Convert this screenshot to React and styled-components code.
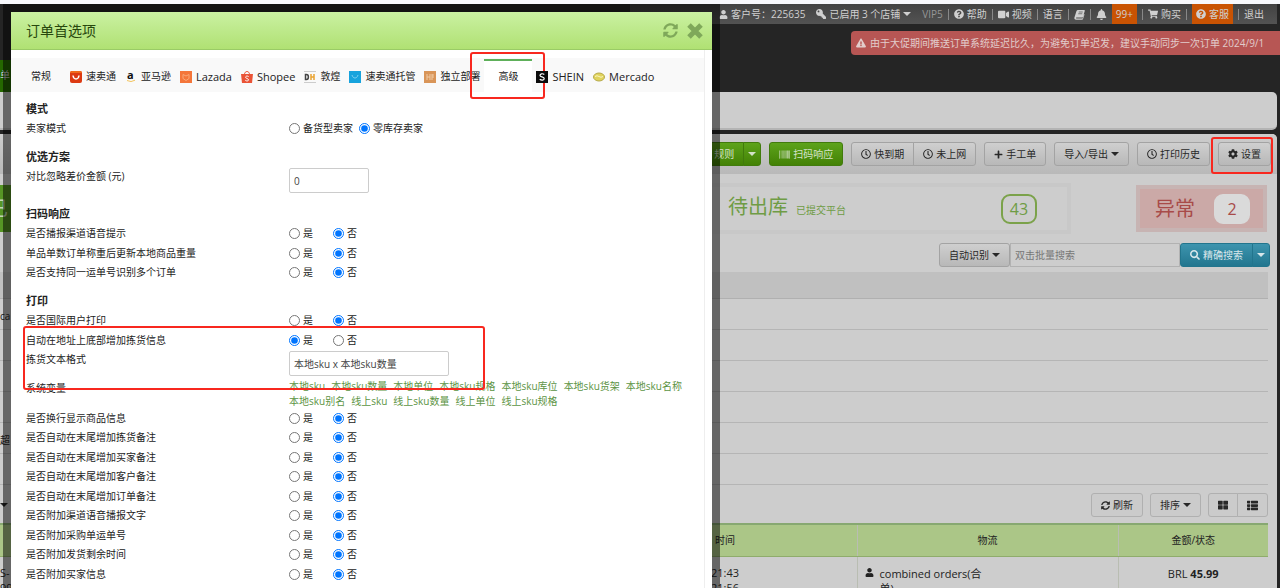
import React from "react";
import styled, {createGlobalStyle, css} from "styled-components";
import {
    FaBarcode,
    FaBell,
    FaCog,
    FaExclamationTriangle,
    FaKey,
    FaPlus,
    FaQuestionCircle,
    FaRegClock,
    FaSearch,
    FaShoppingCart,
    FaSyncAlt,
    FaThLarge,
    FaThList,
    FaUser,
    FaVideo
} from "react-icons/fa";

const GlobalStyle = createGlobalStyle`
  * {
    box-sizing: border-box;
  }

  body {
    margin: 0;
    background: #252525;
    font-family: "Open Sans", "Noto Sans CJK SC", sans-serif;
    font-size: 10px;
    line-height: 15px;
    color: #222;
  }

  button, input {
    font: inherit;
    color: inherit;
  }

  a {
    color: inherit;
    text-decoration: none;
  }
`;

/* ---------- page behind the dialog ---------- */

const Screen = styled.div`
  position: relative;
  height: 100vh;
  overflow: hidden;
  border-top: 4px solid #f7f8fc;
`;

const TopBar = styled.nav`
  display: flex;
  align-items: center;
  justify-content: flex-end;
  gap: 5px;
  height: 20px;
  margin: 0 3px 0 630px;
  padding-right: 13px;
  background: linear-gradient(#424242, #535353);
  color: #d0d0d0;
  white-space: nowrap;
`;

const TopLink = styled.a`
  display: flex;
  align-items: center;
  gap: 3px;
  height: 20px;
  color: ${props => props.$dim ? '#969696' : '#d0d0d0'};
  ${props => props.$hot && css`
    padding: 0 4px;
    background: #c95303;
  `}
  ${props => props.$wide && css`
    margin-right: 6px;
  `}
`;

const Bar = styled.span`
  width: 1px;
  height: 11px;
  background: #888;
`;

const Caret = styled.span`
  width: 8px;
  height: 4px;
  border: 4px solid transparent;
  border-top-color: currentColor;
  border-bottom: 0;
`;

const KeyIcon = styled(FaKey)`
  transform: scaleX(-1);
`;

const Header = styled.header`
  display: flex;
  justify-content: space-between;
  height: 68px;
`;

const NavTab = styled.div`
  align-self: flex-end;
  width: 40px;
  height: 32px;
  padding-top: 8px;
  background: #256800;
  color: #ccc;
`;

const Alert = styled.div`
  display: flex;
  align-items: center;
  gap: 4px;
  width: 429px;
  height: 24px;
  margin-top: 7px;
  padding-left: 5px;
  border-radius: 4px 0 0 4px;
  background: #b75654;
  color: #e2cccb;
  white-space: nowrap;
`;

const NavPanel = styled.div`
  height: 38px;
  margin: 0 3px 4px 0;
  border-radius: 0 5px 5px 0;
  background: #cdcdcd;
  border-bottom: 2px solid #b4b4b4;
`;

const Content = styled.main`
  margin-right: 3px;
  border-radius: 0 5px 0 0;
  background: #cdcdcd;
`;

const Toolbar = styled.div`
  display: flex;
  align-items: center;
  justify-content: flex-end;
  gap: 8px;
  height: 40px;
  padding: 0 6px 0 0;
  border-radius: 0 5px 0 0;
  background: linear-gradient(#cdcdcd, #b9b9b9);
`;

const tones = {
    grey: css`
      background: linear-gradient(#cfcfcf, #b8b8b8);
      border-color: #a3a3a3;
      color: #282828;
    `,
    green: css`
      background: linear-gradient(#5da31b, #438205);
      border-color: #417b0c;
      color: #d4e2c8;
    `,
    teal: css`
      background: linear-gradient(#3d94ae, #22768f);
      border-color: #22758d;
      color: #d6e6ea;
    `,
    flat: css`
      background: #cbcbcb;
      border-color: #b0b0b0;
      color: #282828;
    `
};

const Button = styled.button`
  position: relative;
  display: flex;
  align-items: center;
  justify-content: center;
  gap: 3px;
  height: 24px;
  padding: 0 ${props => props.$tight ? '4px' : '9px'};
  border: 1px solid;
  border-radius: 3px;
  white-space: nowrap;
  ${props => tones[props.$tone || 'grey']}
`;

const ButtonGroup = styled.div`
  display: flex;

  ${Button} + ${Button} {
    margin-left: -1px;
    border-radius: 0 3px 3px 0;
  }

  ${Button}:first-child {
    border-radius: 3px 0 0 3px;
  }
`;

const StatusRow = styled.div`
  display: flex;
  align-items: center;
  padding: 9px 10px 9px 0;
`;

const ActiveStatus = styled.div`
  width: 120px;
  height: 47px;
  background: #569525;
  color: #c4d8b4;
  font-size: 20px;
  line-height: 47px;
  text-indent: -12px;
  overflow: hidden;
`;

const StatusCard = styled.section`
  display: flex;
  align-items: center;
  justify-content: flex-end;
  flex: 1;
  height: 51px;
  padding-right: 30px;
  border: 4px solid #c8c8c8;
  background: #cdcdcd;
  color: #6f9c45;
`;

const StatusInner = styled.div`
  display: flex;
  align-items: center;
  justify-content: space-between;
  width: 309px;
`;

const StatusName = styled.span`
  font-size: 20px;
  line-height: 30px;

  small {
    margin-left: 8px;
    font-size: 10px;
  }
`;

const ErrorCard = styled.section`
  display: flex;
  align-items: center;
  justify-content: space-between;
  width: 131px;
  height: 47px;
  margin-left: 65px;
  padding: 0 13px 0 15px;
  border: 4px solid #c7b4b3;
  background: #cba9a7;
  color: #a84b49;
`;

const Count = styled.span`
  width: 36px;
  height: 30px;
  border: 2px solid ${props => props.$plain ? '#dadada' : '#7ba24a'};
  border-radius: 9px;
  background: ${props => props.$plain ? '#dadada' : 'transparent'};
  font-size: 16px;
  line-height: 27px;
  text-align: center;
`;

const SearchRow = styled.div`
  display: flex;
  justify-content: flex-end;
  padding: 0 7px 5px 0;
`;

const SearchInput = styled.input`
  width: 170px;
  height: 24px;
  padding: 0 4px;
  border: 1px solid #b2b2b2;
  background: #cdcdcd;

  &::placeholder {
    color: #777;
    opacity: 1;
  }
`;

const FilterHead = styled.div`
  height: 27px;
  margin-right: 9px;
  background: #c0c0c0;
  border-bottom: 1px solid #b0b0b0;
`;

const FilterLine = styled.div`
  height: 31px;
  margin-right: 9px;
  padding-top: 10px;
  border-bottom: 1px solid #b5b5b5;
`;

const ListTools = styled.div`
  display: flex;
  align-items: center;
  justify-content: flex-end;
  gap: 7px;
  padding: 8px 9px 6px 0;
`;

const LeftCaret = styled(Caret)`
  margin-right: auto;
`;

const OrderTable = styled.table`
  width: calc(100% - 9px);
  table-layout: fixed;
  border-collapse: collapse;

  th {
    height: 32px;
    padding: 0;
    border-top: 2px solid #87a871;
    border-bottom: 1px solid #8fac6c;
    background: #abc687;
    font-weight: 400;
  }

  th + th, td + td {
    border-left: 1px solid #b9bdb2;
  }

  td {
    height: 50px;
    padding: 8px 0 0;
    font-size: 11px;
    text-align: center;
    vertical-align: top;
  }

  td:first-child {
    text-align: left;
  }
`;

const Buyer = styled.div`
  display: flex;
  align-items: flex-start;
  gap: 6px;
  width: 125px;
  padding: 1px 0 0 7px;
  text-align: left;

  svg {
    flex: none;
    margin-top: 2px;
  }
`;

const Amount = styled.div`
  padding-top: 1px;
`;

/* red frame drawn over the part that needs attention */
const Highlight = styled.span`
  position: absolute;
  inset: ${props => props.$inset};
  border: 2px solid #f8281f;
  border-radius: 3px;
  pointer-events: none;
`;

/* ---------- dialog ---------- */

const Dialog = styled.div`
  position: absolute;
  top: 0;
  bottom: 0;
  left: 3px;
  width: 717px;
  border: 8px solid rgba(0, 0, 0, .5);
  border-bottom: 0;
  background: #fff;
  background-clip: padding-box;
  overflow: hidden;
`;

const DialogHead = styled.div`
  display: flex;
  align-items: center;
  gap: 9px;
  height: 38px;
  padding: 0 9px 0 15px;
  background: linear-gradient(#caf1a2, #b0e173);
  border-bottom: 1px solid #9acb66;
`;

const DialogTitle = styled.h1`
  margin: 0 auto 0 0;
  color: #27470d;
  font-size: 14px;
  font-weight: 400;
  line-height: 20px;
`;

const IconButton = styled.button`
  display: flex;
  padding: 0;
  border: 0;
  background: none;
  color: #7fa85a;
`;

const DialogBody = styled.div`
  height: 100%;
  margin-right: 7px;
  border-right: 1px solid #eee;
`;

const Tabs = styled.div`
  display: flex;
  align-items: flex-end;
  gap: 9px;
  height: 42px;
  padding-left: 10px;
  background: linear-gradient(#fff 8px, #f9f9f9 8px);
`;

const Tab = styled.button`
  position: relative;
  display: flex;
  align-items: center;
  gap: 4px;
  height: 33px;
  padding: 0 ${props => props.$plain ? '10px' : '0'};
  border: 0;
  border-top: 2px solid transparent;
  background: none;
  font-size: ${props => props.$latin ? '11px' : '10px'};
  white-space: nowrap;
  ${props => props.$active && css`
    padding: 0 14px;
    margin: 0 -5px;
    border-top-color: #5eb05a;
    background: #fff;
  `}
`;

const Form = styled.form`
  padding: 7px 12px 0 15px;
`;

const Section = styled.section`
  margin-bottom: 8px;
`;

const Heading = styled.h2`
  margin: 0;
  font-size: 11px;
  line-height: 20px;
`;

const Row = styled.div`
  display: grid;
  grid-template-columns: 263px 1fr;
  min-height: 19px;
  line-height: 19px;

  &:nth-child(even) {
    min-height: 20px;
  }
`;

const Options = styled.div`
  display: flex;
  align-items: center;
  gap: ${props => props.$near ? '6px' : '20px'};
  height: 19px;
`;

const Option = styled.label`
  display: flex;
  align-items: center;
  gap: 3px;

  input {
    width: 11px;
    height: 11px;
    margin: 0;
  }
`;

const TextInput = styled.input`
  width: ${props => props.$wide ? '160px' : '80px'};
  height: 25px;
  margin: 1px 0 3px;
  padding: 0 4px;
  border: 1px solid #ccc;
  border-radius: 2px;
  color: #444;
`;

const Variables = styled.div`
  display: flex;
  flex-wrap: wrap;
  gap: 0 6px;
  color: #5c9444;
  line-height: 15px;
  white-space: nowrap;
`;

const Marked = styled.div`
  position: relative;
`;

const tabs = [
    {name: '常规', plain: true},
    {name: '速卖通', icon: 'ali'},
    {name: '亚马逊', icon: 'amazon'},
    {name: 'Lazada', icon: 'lazada', latin: true},
    {name: 'Shopee', icon: 'shopee', latin: true},
    {name: '敦煌', icon: 'dh'},
    {name: '速卖通托管', icon: 'hosted'},
    {name: '独立部署', icon: 'site'},
    {name: '高级', active: true},
    {name: 'SHEIN', icon: 'shein', latin: true},
    {name: 'Mercado', icon: 'mercado', latin: true}
];

const variables = [
    '本地sku', '本地sku数量', '本地单位', '本地sku规格', '本地sku库位', '本地sku货架',
    '本地sku名称', '本地sku别名', '线上sku', '线上sku数量', '线上单位', '线上sku规格'
];

const scanRows = ['是否播报渠道语音提示', '单品单数订单称重后更新本地商品重量', '是否支持同一运单号识别多个订单'];

const printRows = [
    '是否换行显示商品信息',
    '是否自动在末尾增加拣货备注',
    '是否自动在末尾增加买家备注',
    '是否自动在末尾增加客户备注',
    '是否自动在末尾增加订单备注',
    '是否附加渠道语音播报文字',
    '是否附加采购单运单号',
    '是否附加发货剩余时间',
    '是否附加买家信息'
];

const marks = {
    ali: <>
        <rect width="12" height="12" rx="2" fill="#dc3a12"/>
        <path d="M0 2a2 2 0 0 1 2-2h8a2 2 0 0 1 2 2z" fill="#f06a1c"/>
        <path d="M3 4.500c.6 4.600 5.400 4.600 6 0" fill="none" stroke="#fff" strokeWidth="1.500"/>
    </>,
    amazon: <>
        <text x="2" y="8" fontSize="11" fontWeight="700" fill="#111">a</text>
        <path d="M2 9.500q4 2.300 8-.3" fill="none" stroke="#f3c560" strokeWidth="1"/>
    </>,
    lazada: <>
        <rect width="12" height="12" fill="#f4763a"/>
        <path d="M3 3.500l3 1.500 3-1.500v4L6 9.500 3 7.500z" fill="none" stroke="#f9a878" strokeWidth="1"/>
    </>,
    shopee: <>
        <path d="M0 3h12l-1 9H1z" fill="#ea5336"/>
        <path d="M3.500 3.500c0-4 5-4 5 0" fill="none" stroke="#ea5336" strokeWidth="1"/>
        <path d="M7.600 5.600C6 4.500 4.300 5.300 4.700 6.600c.4 1 2.700.8 2.800 2.200 0 1.400-2 1.500-3.200.5" fill="none" stroke="#fff" strokeWidth="1"/>
    </>,
    dh: <>
        <path d="M0 .5h12M0 11.500h12" stroke="#ccc"/>
        <path d="M1.500 3.500v5h1c2.500 0 2.500-5 0-5z" fill="none" stroke="#444" strokeWidth="1.500"/>
        <path d="M7 3v6M10 3v6M7 6h3" stroke="#e9a331" strokeWidth="1.500"/>
    </>,
    hosted: <>
        <rect width="12" height="12" fill="#17a3dd"/>
        <path d="M3 4c1 4 5 4 6 0" fill="none" stroke="#7cd0f0" strokeWidth="1"/>
    </>,
    site: <>
        <rect width="12" height="12" fill="#d99558"/>
        <path d="M3 3v6M3 6h3M6 3v6M8 3v6M8 4h2M8 6h2" stroke="#f0cba5" strokeWidth="1"/>
    </>,
    shein: <>
        <rect width="12" height="12" fill="#0b0b0b"/>
        <path d="M8.300 3.500C6.500 2 3.800 3 4 4.600c.3 1.600 4.200 1 4.200 3 0 1.700-2.700 2.200-4.500.6" fill="none" stroke="#fff" strokeWidth="1.200"/>
    </>,
    mercado: <>
        <ellipse cx="6" cy="6" rx="5.500" ry="4" fill="#e0d35c" stroke="#b6aa4c"/>
        <path d="M2 5.500q2-1.500 4 0t4 0" fill="none" stroke="#fbf6c0" strokeWidth="1"/>
    </>
};

function TabMark({name}) {
    return <svg width="12" height="12" viewBox="0 0 12 12" aria-hidden="true">{marks[name]}</svg>
}

function BookIcon() {
    return (
        <svg width="11" height="11" viewBox="0 0 22 22" fill="currentColor" aria-hidden="true">
            <path d="M8 2h12a1.500 1.500 0 0 1 1.500 2L18 15.500a2 2 0 0 1-2 1.500H5c-1.500 0-1.500 2 0 2h12l3-9 1 1-3 9a2 2 0 0 1-2 1.500H4c-2.500 0-4-2.500-3-5L5 4c.5-1.300 1.500-2 3-2z"/>
            <path d="M9.500 6h8M8.500 9.500h8" stroke="#555" strokeWidth="1.500"/>
        </svg>
    )
}

function CloseIcon() {
    return (
        <svg width="16" height="16" viewBox="0 0 16 16" aria-hidden="true">
            <path d="M2 2l12 12M14 2L2 14" stroke="currentColor" strokeWidth="5"/>
        </svg>
    )
}

function YesNo({label, yes}) {
    return (
        <Row role="radiogroup" aria-label={label}>
            <span>{label}</span>
            <Options>
                <Option><input type="radio" name={label} defaultChecked={yes}/>是</Option>
                <Option><input type="radio" name={label} defaultChecked={!yes}/>否</Option>
            </Options>
        </Row>
    )
}

function OrderPage() {
    return (
        <>
            <TopBar>
                <TopLink href="#account" $wide><FaUser size={9}/>客户号：225635</TopLink>
                <TopLink href="#shops" $wide><KeyIcon size={10}/>已启用 3 个店铺<Caret/></TopLink>
                <TopLink href="#vip" $dim>VIP5</TopLink>
                <Bar/>
                <TopLink href="#help"><FaQuestionCircle size={10}/>帮助</TopLink>
                <Bar/>
                <TopLink href="#video"><FaVideo size={11}/>视频</TopLink>
                <Bar/>
                <TopLink href="#language">语言</TopLink>
                <Bar/>
                <TopLink href="#docs" aria-label="文档"><BookIcon/></TopLink>
                <Bar/>
                <TopLink href="#messages" aria-label="消息"><FaBell size={11}/></TopLink>
                <TopLink href="#messages" $hot>99+</TopLink>
                <Bar/>
                <TopLink href="#buy"><FaShoppingCart size={10}/>购买</TopLink>
                <Bar/>
                <TopLink href="#service" $hot><FaQuestionCircle size={10}/>客服</TopLink>
                <Bar/>
                <TopLink href="#logout">退出</TopLink>
            </TopBar>
            <Header>
                <NavTab>单</NavTab>
                <Alert>
                    <FaExclamationTriangle size={10}/>
                    由于大促期间推送订单系统延迟比久，为避免订单迟发，建议手动同步一次订单 2024/9/1
                </Alert>
            </Header>
            <NavPanel/>
            <Content>
                <Toolbar>
                    <ButtonGroup>
                        <Button $tone="green">规则</Button>
                        <Button $tone="green" $tight aria-label="更多规则"><Caret/></Button>
                    </ButtonGroup>
                    <Button $tone="green"><FaBarcode size={11}/>扫码响应</Button>
                    <ButtonGroup>
                        <Button><FaRegClock size={10}/>快到期</Button>
                        <Button><FaRegClock size={10}/>未上网</Button>
                    </ButtonGroup>
                    <Button><FaPlus size={9}/>手工单</Button>
                    <Button>导入/导出<Caret/></Button>
                    <Button><FaRegClock size={10}/>打印历史</Button>
                    <Button>
                        <FaCog size={10}/>设置
                        <Highlight $inset="-6px -3px -9px -8px"/>
                    </Button>
                </Toolbar>
                <StatusRow>
                    <ActiveStatus>已</ActiveStatus>
                    <StatusCard>
                        <StatusInner>
                            <StatusName>待出库<small>已提交平台</small></StatusName>
                            <Count>43</Count>
                        </StatusInner>
                    </StatusCard>
                    <ErrorCard>
                        <StatusName>异常</StatusName>
                        <Count $plain>2</Count>
                    </ErrorCard>
                </StatusRow>
                <SearchRow>
                    <Button>自动识别<Caret/></Button>
                    <SearchInput placeholder="双击批量搜索" aria-label="双击批量搜索"/>
                    <ButtonGroup>
                        <Button $tone="teal"><FaSearch size={10}/>精确搜索</Button>
                        <Button $tone="teal" $tight aria-label="搜索方式"><Caret/></Button>
                    </ButtonGroup>
                </SearchRow>
                <FilterHead/>
                <FilterLine>ca</FilterLine>
                <FilterLine/>
                <FilterLine/>
                <FilterLine/>
                <FilterLine>超</FilterLine>
                <FilterLine/>
                <ListTools>
                    <LeftCaret/>
                    <Button $tone="flat"><FaSyncAlt size={9}/>刷新</Button>
                    <Button $tone="flat">排序<Caret/></Button>
                    <ButtonGroup>
                        <Button $tone="flat" aria-label="网格"><FaThLarge size={10}/></Button>
                        <Button $tone="flat" aria-label="列表"><FaThList size={11}/></Button>
                    </ButtonGroup>
                </ListTools>
                <OrderTable>
                    <colgroup>
                        <col/>
                        <col width="264"/>
                        <col width="261"/>
                        <col width="150"/>
                    </colgroup>
                    <thead>
                    <tr>
                        <th/>
                        <th>时间</th>
                        <th>物流</th>
                        <th>金额/状态</th>
                    </tr>
                    </thead>
                    <tbody>
                    <tr>
                        <td>S-<br/>99</td>
                        <td>21:43<br/>21:56</td>
                        <td><Buyer><FaUser size={9}/><span>combined orders(合单)</span></Buyer></td>
                        <td><Amount>BRL <b>45.99</b></Amount></td>
                    </tr>
                    </tbody>
                </OrderTable>
            </Content>
        </>
    )
}

function Preferences() {
    return (
        <Dialog role="dialog" aria-labelledby="preferences-title">
            <DialogHead>
                <DialogTitle id="preferences-title">订单首选项</DialogTitle>
                <IconButton aria-label="刷新"><FaSyncAlt size={15}/></IconButton>
                <IconButton aria-label="关闭"><CloseIcon/></IconButton>
            </DialogHead>
            <DialogBody>
                <Tabs role="tablist">
                    {tabs.map(tab => (
                        <Tab
                            key={tab.name}
                            role="tab"
                            aria-selected={!!tab.active}
                            $plain={tab.plain}
                            $latin={tab.latin}
                            $active={tab.active}
                        >
                            {tab.icon && <TabMark name={tab.icon}/>}
                            {tab.name}
                            {tab.active && <Highlight $inset="-9px -13px -7px -14px"/>}
                        </Tab>
                    ))}
                </Tabs>
                <Form>
                    <Section>
                        <Heading>模式</Heading>
                        <Row role="radiogroup" aria-label="卖家模式">
                            <span>卖家模式</span>
                            <Options $near>
                                <Option><input type="radio" name="seller"/>备货型卖家</Option>
                                <Option><input type="radio" name="seller" defaultChecked/>零库存卖家</Option>
                            </Options>
                        </Row>
                    </Section>
                    <Section>
                        <Heading>优选方案</Heading>
                        <Row>
                            <label htmlFor="ignore-diff">对比忽略差价金额 (元)</label>
                            <TextInput id="ignore-diff" defaultValue="0"/>
                        </Row>
                    </Section>
                    <Section>
                        <Heading>扫码响应</Heading>
                        {scanRows.map(label => <YesNo key={label} label={label}/>)}
                    </Section>
                    <Section>
                        <Heading>打印</Heading>
                        <YesNo label="是否国际用户打印"/>
                        <Marked>
                            <YesNo label="自动在地址上底部增加拣货信息" yes/>
                            <Row>
                                <label htmlFor="pick-format">拣货文本格式</label>
                                <TextInput id="pick-format" $wide defaultValue="本地sku x 本地sku数量"/>
                            </Row>
                            <Highlight $inset="-5px 207px -11px -3px"/>
                        </Marked>
                        <Row>
                            <span>系统变量</span>
                            <Variables>
                                {variables.map(name => <a key={name} href="#insert">{name}</a>)}
                            </Variables>
                        </Row>
                        <div>
                            {printRows.map(label => <YesNo key={label} label={label}/>)}
                        </div>
                    </Section>
                </Form>
            </DialogBody>
        </Dialog>
    )
}

export default function App() {
    return (
        <Screen>
            <GlobalStyle/>
            <OrderPage/>
            <Preferences/>
        </Screen>
    )
}
